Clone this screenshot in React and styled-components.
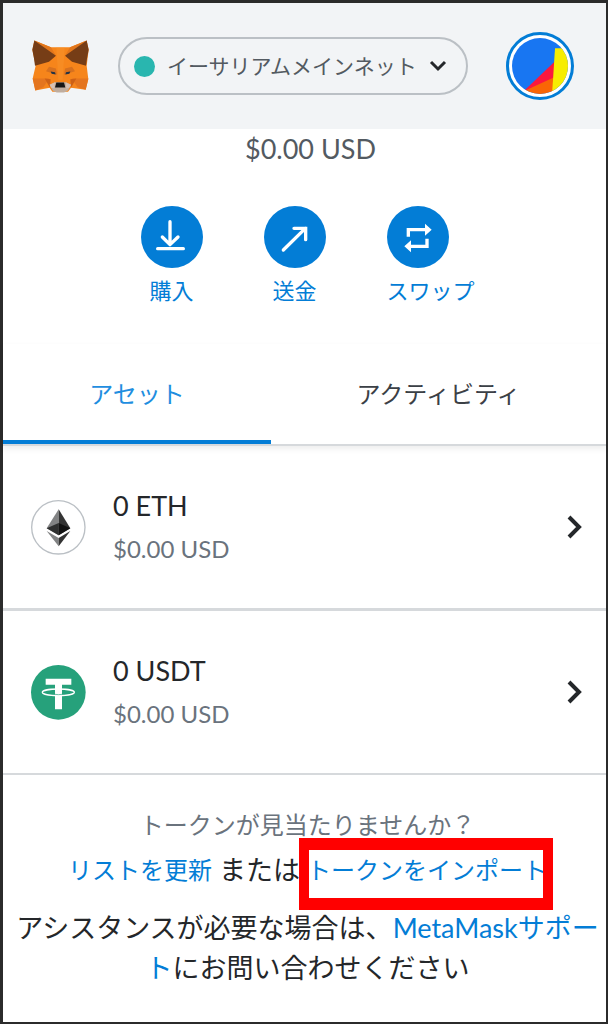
import React, { useState } from 'react'
import styled, { createGlobalStyle } from 'styled-components'

const GlobalStyle = createGlobalStyle`
  * {
    box-sizing: border-box;
  }
  body {
    margin: 0;
    background: #fff;
    font-family: Lato, "Noto Sans CJK JP", sans-serif;
    color: #24272a;
  }
  button, select {
    font-family: inherit;
    color: inherit;
    background: none;
    border: 0;
    padding: 0;
    cursor: pointer;
  }
  svg {
    display: block;
    flex: none;
  }
`

const Frame = styled.div`
  min-height: 100vh;
  border: 3px solid #2b2b2b;
  border-right-width: 2px;
  border-bottom-width: 2px;
`

const Header = styled.header`
  display: flex;
  align-items: center;
  height: 126px;
  padding: 0 32px 0 29px;
  background: #f2f4f6;
`

const Network = styled.label`
  display: flex;
  align-items: center;
  height: 58px;
  margin: 0 auto 0 29px;
  padding: 0 19px 0 14px;
  border: 2px solid #bbc0c5;
  border-radius: 29px;
`

const Dot = styled.span`
  width: 21px;
  height: 21px;
  margin-right: 12px;
  border-radius: 50%;
  background: #29b6af;
`

const NetworkSelect = styled.select`
  appearance: none;
  width: 262px;
  font-size: 21px;
  line-height: 32px;
  color: #535a61;
  outline: none;
`

const Account = styled.button`
  padding: 3px;
  border: 3px solid #037dd6;
  border-radius: 50%;
  background: #fff;
`

const Balance = styled.div`
  padding-left: 12px;
  font-size: 27px;
  line-height: 40px;
  text-align: center;
  color: #535a61;
`

const Actions = styled.div`
  display: flex;
  justify-content: center;
  gap: 61px;
  padding: 37px 20px 0 0;
`

const ActionButton = styled.button`
  width: 62px;
  font-size: 22px;
  line-height: 32px;
  text-align: center;
  white-space: nowrap;
  color: #037dd6;
`

const ActionIcon = styled.span`
  display: block;
  margin-bottom: 7px;
  border-radius: 50%;
  background: #037dd6;
`

const Tabs = styled.div`
  display: flex;
  margin-top: 37px;
  border-bottom: 2px solid #d6d9dc;
  box-shadow: 0 3px 6px rgba(0, 0, 0, 0.07);
`

const Tab = styled.button`
  flex: ${({ $grow }) => $grow} 1 0;
  height: 100px;
  padding-top: 4px;
  border-bottom: 4px solid ${({ $active }) => ($active ? '#037dd6' : 'transparent')};
  font-size: 24px;
  line-height: 36px;
  color: ${({ $active }) => ($active ? '#1f8ee0' : '#3b4046')};
`

const AssetList = styled.ul`
  margin: 0;
  padding: 0;
  list-style: none;
`

const AssetItem = styled.li`
  border-bottom: 3px solid #d6d9dc;

  &:last-child {
    border-bottom-width: 2px;
  }
`

const AssetButton = styled.button`
  display: flex;
  align-items: center;
  width: 100%;
  height: 162px;
  padding: 0 23px 0 28px;
  text-align: left;
`

const AssetInfo = styled.span`
  flex: 1;
  margin-left: 27px;
`

const Amount = styled.span`
  display: block;
  font-size: 27px;
  line-height: 43px;
`

const Fiat = styled.span`
  display: block;
  font-size: 24px;
  line-height: 43px;
  color: #6a737d;
`

const Footer = styled.footer`
  padding: 28px 0 0 6px;
  text-align: center;
  font-size: 27px;
`

const Missing = styled.p`
  margin: 0;
  font-size: 24px;
  line-height: 44px;
  color: #6a737d;
`

const Choices = styled.div`
  display: flex;
  justify-content: center;
  gap: 7px;
  line-height: 46px;
`

const Link = styled.a`
  color: #037dd6;
  text-decoration: none;
`

const SmallLink = styled(Link)`
  font-size: 24px;
`

const MarkedLink = styled(SmallLink)`
  position: relative;

  &::after {
    content: '';
    position: absolute;
    inset: -9px -6px -17px -8px;
    border: solid #f00;
    border-width: 12px 10px;
  }
`

const Support = styled.p`
  margin: 15px 0 0;
  line-height: 40px;
`

const Fox = () => (
  <svg width="57" height="53" viewBox="96 121 171 158" aria-label="MetaMask" role="img">
    <path fill="#f6851b" d="M103 122 153 142H210L260 122 266 150 260 198 265 238 257 270 213 264 204 276H157L149 264 106 272 98 236 107 198 97 150Z" />
    <path fill="#e2761b" d="M103 122 153 142 168 168 142 152ZM260 122 210 142 195 168 221 152Z" />
    <path fill="#763d16" d="M103 122 168 168 147 186 105 198 102 176 97 150ZM260 122 195 168 216 186 258 198 261 176 266 150Z" />
    <path fill="#e4751f" d="M98 236H148L130 262 106 272ZM265 236H215L233 262 257 270Z" />
    <path fill="#cd6116" d="M134 236 152 238 150 264ZM229 236 211 238 213 264Z" />
    <path fill="#d7711f" d="M147 201 168 206 171 225 138 214ZM216 201 195 206 192 225 225 214Z" />
    <path fill="#f89c35" d="M169 142H194L188 240H175Z" opacity=".35" />
    <path fill="#233447" d="M152 215 165 217 167 224 155 222ZM211 215 198 217 196 224 208 222Z" />
    <path fill="#c0ad9e" d="M149 255 165 247H197L213 255 204 272 192 278H170L158 272Z" />
    <path fill="#d7c1b3" d="M149 255 165 247 163 266 154 264ZM213 255 197 247 199 266 208 264Z" />
    <path fill="#161616" d="M169 248H192L196 263H165Z" />
  </svg>
)

const Jazzicon = () => (
  <svg width="56" height="56" viewBox="0 0 164 164">
    <clipPath id="face">
      <circle cx="82" cy="82" r="82" />
    </clipPath>
    <g clipPath="url(#face)">
      <path fill="#1876f2" d="M0 0H164V164H0Z" />
      <path fill="#fb183e" d="M34 156 126 68 122 125Z" />
      <path fill="#fa6605" d="M34 156 122 116 120 170H34Z" />
      <path fill="#f7ed00" d="M126 30H170V170H117Z" />
    </g>
  </svg>
)

const ChevronDown = () => (
  <svg width="18" height="12" viewBox="0 0 18 12" fill="none" stroke="#24272a" strokeWidth="3">
    <path d="M2 2 9 9 16 2" />
  </svg>
)

const ChevronRight = () => (
  <svg width="16" height="26" viewBox="0 0 16 26" fill="none" stroke="#24272a" strokeWidth="4">
    <path d="M2 3 12 13 2 23" />
  </svg>
)

const ACTIONS = [
  {
    label: '購入',
    icon: <path d="M87 47V114M64 93 87 116 111 93M50 128H127" strokeLinecap="round" strokeLinejoin="round" />,
  },
  {
    label: '送金',
    icon: <path d="M58 132 124 67M90 67H125V101" strokeLinecap="round" />,
  },
  {
    label: 'スワップ',
    icon: (
      <>
        <path d="M64 92V71H116M120 98V121H70" />
        <path d="M114 53 134 71 114 89ZM72 103 52 121 72 139Z" fill="#fff" stroke="none" />
      </>
    ),
  },
]

const EthIcon = () => (
  <svg width="55" height="55" viewBox="0 0 165 165">
    <circle cx="82" cy="82" r="80" fill="#fff" stroke="#bbc0c5" strokeWidth="4" />
    <path fill="#828384" d="M83 28 47 85 83 106Z" />
    <path fill="#343434" d="M83 28 118 85 83 106Z" />
    <path fill="#2f3030" d="M83 69 47 85 83 106Z" />
    <path fill="#131313" d="M83 69 118 85 83 106Z" />
    <path fill="#828384" d="M47 93 83 114V139Z" />
    <path fill="#343434" d="M118 93 83 114V139Z" />
  </svg>
)

const UsdtIcon = () => (
  <svg width="55" height="55" viewBox="0 0 165 165">
    <circle cx="82" cy="82" r="82" fill="#26a17b" />
    <path fill="#fff" d="M44 41H121V59H93V133H72V59H44Z" />
    <ellipse cx="82" cy="82" rx="48" ry="10" fill="none" stroke="#fff" strokeWidth="4" />
    <path d="M72 88Q82 90 93 88" fill="none" stroke="#26a17b" strokeWidth="2" />
  </svg>
)

const ASSETS = [
  { amount: '0 ETH', fiat: '$0.00 USD', icon: <EthIcon /> },
  { amount: '0 USDT', fiat: '$0.00 USD', icon: <UsdtIcon /> },
]

const TABS = [
  { label: 'アセット', grow: 4 },
  { label: 'アクティビティ', grow: 5 },
]

const App = () => {
  const [tab, setTab] = useState(0)

  return (
    <>
      <GlobalStyle />
      <Frame>
        <Header>
          <Fox />
          <Network>
            <Dot />
            <NetworkSelect aria-label="ネットワーク">
              <option>イーサリアムメインネット</option>
            </NetworkSelect>
            <ChevronDown />
          </Network>
          <Account aria-label="アカウント">
            <Jazzicon />
          </Account>
        </Header>

        <main>
          <Balance>$0.00 USD</Balance>
          <Actions>
            {ACTIONS.map(({ label, icon }) => (
              <ActionButton key={label}>
                <ActionIcon>
                  <svg width="62" height="62" viewBox="0 0 186 186" fill="none" stroke="#fff" strokeWidth="10">
                    {icon}
                  </svg>
                </ActionIcon>
                {label}
              </ActionButton>
            ))}
          </Actions>

          <Tabs role="tablist">
            {TABS.map(({ label, grow }, i) => (
              <Tab
                key={label}
                role="tab"
                aria-selected={tab === i}
                $active={tab === i}
                $grow={grow}
                onClick={() => setTab(i)}
              >
                {label}
              </Tab>
            ))}
          </Tabs>

          <AssetList>
            {ASSETS.map(({ amount, fiat, icon }) => (
              <AssetItem key={amount}>
                <AssetButton>
                  {icon}
                  <AssetInfo>
                    <Amount>{amount}</Amount>
                    <Fiat>{fiat}</Fiat>
                  </AssetInfo>
                  <ChevronRight />
                </AssetButton>
              </AssetItem>
            ))}
          </AssetList>
        </main>

        <Footer>
          <Missing>トークンが見当たりませんか？</Missing>
          <Choices>
            <SmallLink href="#refresh">リストを更新</SmallLink>
            <span>または</span>
            <MarkedLink href="#import">トークンをインポート</MarkedLink>
          </Choices>
          <Support>
            アシスタンスが必要な場合は、<Link href="#support">MetaMaskサポート</Link>にお問い合わせください
          </Support>
        </Footer>
      </Frame>
    </>
  )
}

export default App
